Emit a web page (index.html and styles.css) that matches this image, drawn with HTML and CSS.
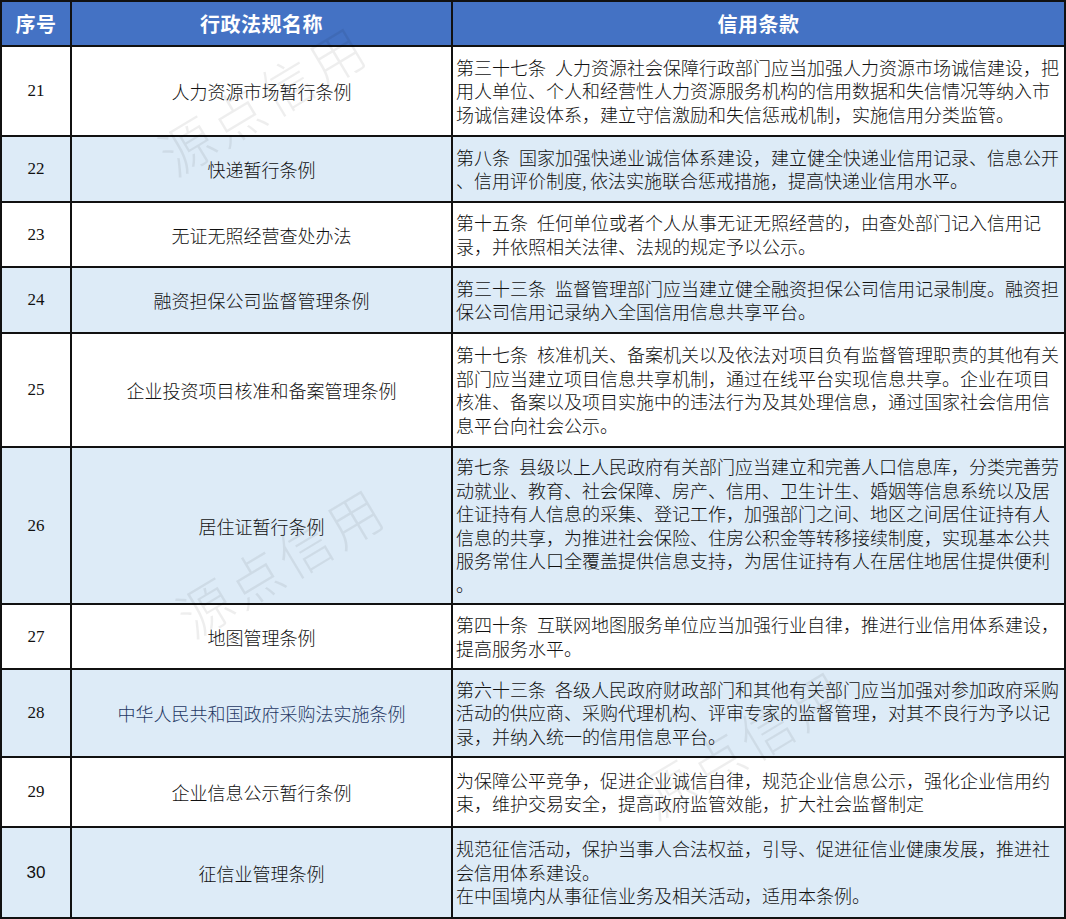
FILE: index.html
```html
<!DOCTYPE html>
<html lang="zh-CN">
<head>
<meta charset="utf-8">
<title>行政法规信用条款</title>
<link rel="stylesheet" href="styles.css">
</head>
<body>
<div class="sheet">
  <div class="grid">
    <div class="cell head">序号</div>
    <div class="cell head">行政法规名称</div>
    <div class="cell head">信用条款</div>

    <div class="cell num">21</div>
    <div class="cell name">人力资源市场暂行条例</div>
    <div class="cell clause">第三十七条&ensp;人力资源社会保障行政部门应当加强人力资源市场诚信建设，把<br>用人单位、个人和经营性人力资源服务机构的信用数据和失信情况等纳入市<br>场诚信建设体系，建立守信激励和失信惩戒机制，实施信用分类监管。</div>

    <div class="cell num alt">22</div>
    <div class="cell name alt">快递暂行条例</div>
    <div class="cell clause alt">第八条&ensp;国家加强快递业诚信体系建设，建立健全快递业信用记录、信息公开<br>、信用评价制度,&thinsp;依法实施联合惩戒措施，提高快递业信用水平。</div>

    <div class="cell num">23</div>
    <div class="cell name">无证无照经营查处办法</div>
    <div class="cell clause">第十五条&ensp;任何单位或者个人从事无证无照经营的，由查处部门记入信用记<br>录，并依照相关法律、法规的规定予以公示。</div>

    <div class="cell num alt">24</div>
    <div class="cell name alt">融资担保公司监督管理条例</div>
    <div class="cell clause alt">第三十三条&ensp;监督管理部门应当建立健全融资担保公司信用记录制度。融资担<br>保公司信用记录纳入全国信用信息共享平台。</div>

    <div class="cell num">25</div>
    <div class="cell name">企业投资项目核准和备案管理条例</div>
    <div class="cell clause">第十七条&ensp;核准机关、备案机关以及依法对项目负有监督管理职责的其他有关<br>部门应当建立项目信息共享机制，通过在线平台实现信息共享。企业在项目<br>核准、备案以及项目实施中的违法行为及其处理信息，通过国家社会信用信<br>息平台向社会公示。</div>

    <div class="cell num alt">26</div>
    <div class="cell name alt">居住证暂行条例</div>
    <div class="cell clause alt">第七条&ensp;县级以上人民政府有关部门应当建立和完善人口信息库，分类完善劳<br>动就业、教育、社会保障、房产、信用、卫生计生、婚姻等信息系统以及居<br>住证持有人信息的采集、登记工作，加强部门之间、地区之间居住证持有人<br>信息的共享，为推进社会保险、住房公积金等转移接续制度，实现基本公共<br>服务常住人口全覆盖提供信息支持，为居住证持有人在居住地居住提供便利<br>。</div>

    <div class="cell num">27</div>
    <div class="cell name">地图管理条例</div>
    <div class="cell clause">第四十条&ensp;互联网地图服务单位应当加强行业自律，推进行业信用体系建设，<br>提高服务水平。</div>

    <div class="cell num alt">28</div>
    <div class="cell name alt blue">中华人民共和国政府采购法实施条例</div>
    <div class="cell clause alt">第六十三条&ensp;各级人民政府财政部门和其他有关部门应当加强对参加政府采购<br>活动的供应商、采购代理机构、评审专家的监督管理，对其不良行为予以记<br>录，并纳入统一的信用信息平台。</div>

    <div class="cell num">29</div>
    <div class="cell name">企业信息公示暂行条例</div>
    <div class="cell clause">为保障公平竞争，促进企业诚信自律，规范企业信息公示，强化企业信用约<br>束，维护交易安全，提高政府监管效能，扩大社会监督制定</div>

    <div class="cell num alt sans">30</div>
    <div class="cell name alt">征信业管理条例</div>
    <div class="cell clause alt">规范征信活动，保护当事人合法权益，引导、促进征信业健康发展，推进社<br>会信用体系建设。<br>在中国境内从事征信业务及相关活动，适用本条例。</div>
  </div>

  <div class="mark mark-1">源点信用</div>
  <div class="mark mark-2">源点信用</div>
  <div class="mark mark-3">源点信用</div>
</div>
</body>
</html>
```

FILE: styles.css
```css
html, body {
  margin: 0;
  padding: 0;
  background: #ffffff;
}

.sheet {
  position: relative;
  width: 1066px;
  height: 919px;
  overflow: hidden;
}

.grid {
  display: grid;
  grid-template-columns: 68px 379px 611px;
  grid-template-rows: 43px 88px 64px 63px 64px 112px 155px 63px 86px 68px 89px;
  gap: 2px;
  border: 2px solid #111;
  background: #111;
  width: 1062px;
}

.cell {
  background: #ffffff;
  color: #111;
  font-family: "Noto Sans CJK SC", sans-serif;
  font-size: 18px;
  font-weight: 300;
  display: flex;
  align-items: center;
  overflow: hidden;
}

.cell.alt {
  background: #ddebf7;
}

.head {
  background: #4472c4;
  color: #ffffff;
  font-size: 20px;
  font-weight: 700;
  justify-content: center;
  letter-spacing: 0.5px;
}

.num {
  justify-content: center;
  font-family: "Liberation Serif", serif;
  font-size: 17px;
  font-weight: 400;
}

.num.sans {
  font-family: "Liberation Sans", sans-serif;
}

.name {
  justify-content: center;
  text-align: center;
}

.name.blue {
  color: #1f3864;
}

.clause {
  padding-left: 3px;
  line-height: 23.5px;
  white-space: nowrap;
}

.mark {
  position: absolute;
  transform: translate(-50%, -50%) rotate(-31deg);
  font-family: "Noto Sans CJK SC", sans-serif;
  font-weight: 300;
  font-size: 54px;
  letter-spacing: 4px;
  color: rgba(0, 0, 0, 0.065);
  white-space: nowrap;
  pointer-events: none;
}

.mark-1 {
  left: 262px;
  top: 98px;
}

.mark-2 {
  left: 280px;
  top: 560px;
}

.mark-3 {
  left: 742px;
  top: 742px;
}
```
